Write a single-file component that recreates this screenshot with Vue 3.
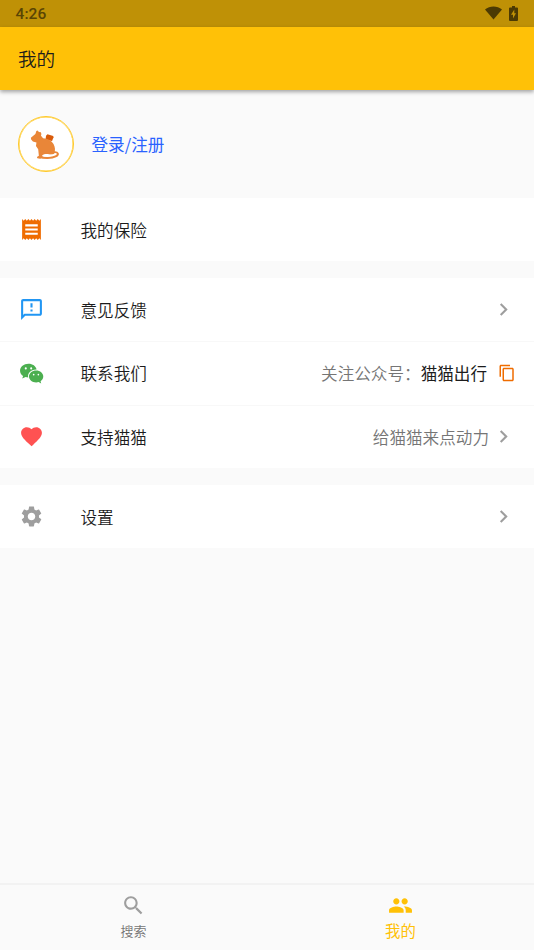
<script setup>
const groups = [
  [{ icon: 'receipt', label: '我的保险' }],
  [
    { icon: 'feedback', label: '意见反馈', arrow: true },
    { icon: 'wechat', label: '联系我们', note: '关注公众号：', value: '猫猫出行', copy: true },
    { icon: 'heart', label: '支持猫猫', note: '给猫猫来点动力', arrow: true },
  ],
  [{ icon: 'gear', label: '设置', arrow: true }],
]

const icons = {
  receipt: 'M18 17H6v-2h12v2zm0-4H6v-2h12v2zm0-4H6V7h12v2zM3 22l1.5-1.5L6 22l1.500-1.500L9 22l1.500-1.500L12 22l1.500-1.500L15 22l1.500-1.500L18 22l1.500-1.500L21 22V2l-1.500 1.500L18 2l-1.500 1.500L15 2l-1.500 1.500L12 2l-1.500 1.500L9 2 7.500 3.500 6 2 4.500 3.500 3 2v20z',
  feedback: 'M20 2H4c-1.100 0-1.990.9-1.990 2L2 22l4-4h14c1.100 0 2-.9 2-2V4c0-1.100-.9-2-2-2zm0 14H5.170l-.59.59-.58.58V4h16v12zm-9-4h2v2h-2zm0-6h2v4h-2z',
  heart: 'M12 21.350l-1.450-1.320C5.400 15.360 2 12.280 2 8.500 2 5.420 4.420 3 7.500 3c1.740 0 3.410.81 4.500 2.090C13.090 3.810 14.760 3 16.500 3 19.580 3 22 5.420 22 8.500c0 3.780-3.400 6.860-8.550 11.540L12 21.350z',
  gear: 'M19.140 12.940c.04-.3.060-.61.060-.94 0-.32-.02-.64-.07-.94l2.030-1.580c.18-.14.23-.41.120-.61l-1.920-3.320c-.12-.22-.37-.29-.59-.22l-2.390.96c-.5-.38-1.030-.7-1.620-.94l-.36-2.540c-.04-.24-.24-.41-.48-.41h-3.840c-.24 0-.43.17-.47.41l-.36 2.540c-.59.24-1.130.57-1.620.94l-2.390-.96c-.22-.08-.47 0-.59.22L2.740 8.870c-.12.21-.08.47.12.61l2.030 1.580c-.05.3-.09.63-.09.94s.02.64.07.94l-2.030 1.580c-.18.14-.23.41-.12.61l1.920 3.320c.12.22.37.29.59.22l2.390-.96c.5.38 1.030.7 1.620.94l.36 2.540c.05.24.24.41.48.41h3.840c.24 0 .44-.17.47-.41l.36-2.540c.59-.24 1.130-.56 1.620-.94l2.390.96c.22.08.47 0 .59-.22l1.920-3.320c.12-.22.070-.47-.12-.61l-2.010-1.580zM12 15.600c-1.980 0-3.600-1.620-3.600-3.600s1.620-3.600 3.600-3.600 3.600 1.620 3.600 3.600-1.620 3.600-3.600 3.600z',
}
</script>

<template>
  <div class="screen">
    <div class="status">
      <span class="clock">4:26</span>
      <svg class="wifi" viewBox="0 0 18 14"><path d="M0 3.200C5-.9 13-.9 18 3.200L9 14z" /></svg>
      <svg class="battery" viewBox="0 0 9 15"><path fill-rule="evenodd" d="M3 0h3v1.500h2q1 0 1 1V14q0 1-1 1H1q-1 0-1-1V2.500q0-1 1-1h2zM5.300 3.500 2 8.800h2v3.800l3-5.300H5.300z" /></svg>
    </div>
    <header class="appbar">我的</header>

    <main class="content">
      <section class="profile">
        <div class="avatar">
          <svg viewBox="0 0 56 56">
            <path class="pack" d="m28 19.500 1.500-1.500 6 1.700.3 1.300-1.500 4-6.800-1.500z" />
            <path class="cat" d="M12.300 21.600 17 17.700l1-3.200 1.200-.5 1.500 1.500 2 .2.500 2-.4 1.700 2.200 2.600c5.300.4 8.700 2.500 10.800 6 1.800 3.200 2 6.800.7 10.200L32 39.300l-5.500.5-4.500 3.400-3-.3-.4-1.300 2-1.500-.7-6.600-2.300-3.500.5-3.600-3.700-1-1.800-2z" />
            <path class="tail" d="M21 41.500c4.500 1.200 13 1.500 17-.6 3.900-2 2.800-5.200-2.500-4.300" />
            <path class="belly" d="M24 39.800c1.500-1.300 4.500-1.600 7-1.200l4 .5-3 .9 1.200.6-4 .3-5.200-.2z" />
          </svg>
        </div>
        <a class="login">登录/注册</a>
      </section>

      <section v-for="(rows, g) in groups" :key="g" class="group">
        <div v-for="row in rows" :key="row.label" class="row">
          <svg v-if="row.icon === 'wechat'" class="icon wechat" viewBox="0 0 24 24">
            <path fill-rule="evenodd" d="M9.100 2.700C4.600 2.700 1 5.600 1 9.300c0 2.100 1.100 3.900 2.900 5.100l-.8 2.500 3.200-1.500c.8.2 1.700.4 2.600.4-1.100-4 2.600-7.800 8-7.600C16.200 5 13.100 2.700 9.100 2.700zM6.500 6.100a1 1 0 1 1 0 2 1 1 0 0 1 0-2zm5.200 0a1 1 0 1 1 0 2 1 1 0 0 1 0-2z" />
            <path fill-rule="evenodd" d="M16.500 9.200c-3.900 0-6.900 2.600-6.900 5.700s3 5.700 6.900 5.700c.8 0 1.600-.1 2.300-.4l2.500 1.400-.6-2.200c1.500-1 2.600-2.700 2.600-4.500 0-3.100-3-5.700-6.800-5.700zM14.100 12.300a.8.800 0 1 1 0 1.600.8.800 0 0 1 0-1.600zm4.500 0a.8.800 0 1 1 0 1.600.8.800 0 0 1 0-1.600z" />
          </svg>
          <svg v-else class="icon" :class="row.icon" viewBox="0 0 24 24"><path :d="icons[row.icon]" /></svg>
          <span class="label">{{ row.label }}</span>
          <span v-if="row.note" class="note">{{ row.note }}</span>
          <span v-if="row.value" class="value">{{ row.value }}</span>
          <svg v-if="row.arrow" class="arrow" viewBox="0 0 24 24"><path d="M10 6 8.590 7.410 13.170 12l-4.580 4.590L10 18l6-6z" /></svg>
          <svg v-if="row.copy" class="copy" viewBox="0 0 24 24"><path d="M16 1H4c-1.100 0-2 .9-2 2v14h2V3h12V1zm3 4H8c-1.100 0-2 .9-2 2v14c0 1.100.9 2 2 2h11c1.100 0 2-.9 2-2V7c0-1.100-.9-2-2-2zm0 16H8V7h11v14z" /></svg>
        </div>
      </section>
    </main>

    <nav class="tabs">
      <div class="tab">
        <svg viewBox="0 0 24 24"><path d="M15.500 14h-.79l-.28-.27C15.410 12.590 16 11.110 16 9.500 16 5.910 13.090 3 9.500 3S3 5.910 3 9.500 5.910 16 9.500 16c1.610 0 3.090-.59 4.230-1.570l.27.28v.79l5 4.990L20.490 19l-4.990-5zm-6 0C7.010 14 5 11.990 5 9.500S7.010 5 9.500 5 14 7.010 14 9.500 11.990 14 9.500 14z" /></svg>
        <span>搜索</span>
      </div>
      <div class="tab active">
        <svg viewBox="0 0 24 24"><path d="M16 11c1.660 0 2.990-1.340 2.990-3S17.660 5 16 5s-3 1.340-3 3 1.340 3 3 3zm-8 0c1.660 0 2.990-1.340 2.990-3S9.660 5 8 5 5 6.340 5 8s1.340 3 3 3zm0 2c-2.330 0-7 1.170-7 3.500V19h14v-2.500c0-2.330-4.670-3.500-7-3.500zm8 0c-.29 0-.62.020-.97.050 1.160.84 1.970 1.970 1.970 3.450V19h6v-2.500c0-2.330-4.670-3.500-7-3.500z" /></svg>
        <span>我的</span>
      </div>
    </nav>
  </div>
</template>

<style>
body { margin: 0; }
</style>

<style scoped>
.screen {
  display: flex;
  flex-direction: column;
  height: 950px;
  background: #fafafa;
  color: #1c1c1c;
  font-family: "Noto Sans CJK SC", sans-serif;
  font-weight: 350;
  font-size: 16.6px;
  overflow: hidden;
}
svg { display: block; flex: none; fill: currentColor; }
.status {
  display: flex;
  align-items: center;
  box-sizing: border-box;
  height: 27px;
  padding: 0 16px 0 15.500px;
  background: #bf9106;
  color: #4c3a03;
}
.clock { flex: 1; font: 500 15.500px/27px Roboto, sans-serif; letter-spacing: 0.1px; padding-top: 1px; color: #594404; }
.wifi { width: 17px; height: 14px; margin: 0 7.500px 1px 0; }
.battery { width: 9px; height: 15px; margin-bottom: 1px; }
.appbar {
  box-sizing: border-box;
  height: 63px;
  padding-left: 18px;
  background: #ffc107;
  box-shadow: 0 2px 4px rgba(0, 0, 0, 0.35);
  font-size: 18.600px;
  line-height: 61px;
}
.content { flex: 1; }
.profile { display: flex; align-items: center; gap: 18px; box-sizing: border-box; height: 108px; padding: 0 0 1px 17.500px; }
.avatar {
  box-sizing: border-box;
  width: 56px;
  height: 56px;
  border: 1px solid #ffc928;
  border-radius: 50%;
  background: #fff;
  box-shadow: inset 0 0 0 0.500px #ffc928;
}
.avatar svg { width: 54px; height: 54px; }
.cat { fill: #e98638; }
.pack { fill: #d95b0b; }
.tail { fill: none; stroke: #e98638; stroke-width: 2; }
.belly { fill: #fff; }
.login { color: #2962ff; font-weight: 400; }
.group { margin-bottom: 17px; background: #fff; }
.row { display: flex; align-items: center; box-sizing: border-box; height: 63px; padding: 0 18.500px 0 18.500px; }
.row + .row { height: 63.500px; border-top: 1px solid #f8f8f8; }
.icon { width: 25px; height: 25px; margin-right: 37px; }
.receipt { color: #ef6c00; }
.feedback { color: #2196f3; }
.wechat { color: #4caf50; }
.heart { color: #ff5252; }
.gear { color: #9e9e9e; }
.label { flex: 1; }
.label, .note, .value { line-height: 24px; }
.note { color: #757575; }
.arrow { width: 25px; height: 25px; color: #9e9e9e; }
.note + .arrow { margin-left: 1.500px; }
.copy { width: 18px; height: 18px; margin-left: 11px; margin-right: -0.500px; color: #ef6c00; }
.tabs { display: flex; box-sizing: border-box; height: 67px; border-top: 2px solid #f2f2f2; }
.tab { flex: 1; display: flex; flex-direction: column; align-items: center; padding-top: 8px; color: #757575; font-size: 13px; line-height: 26px; }
.tab svg { width: 25px; height: 25px; color: #9e9e9e; }
.active, .active svg { color: #ffc107; }
.active { font-size: 15.400px; line-height: 25px; }
.active, .value { font-weight: 400; }
</style>
